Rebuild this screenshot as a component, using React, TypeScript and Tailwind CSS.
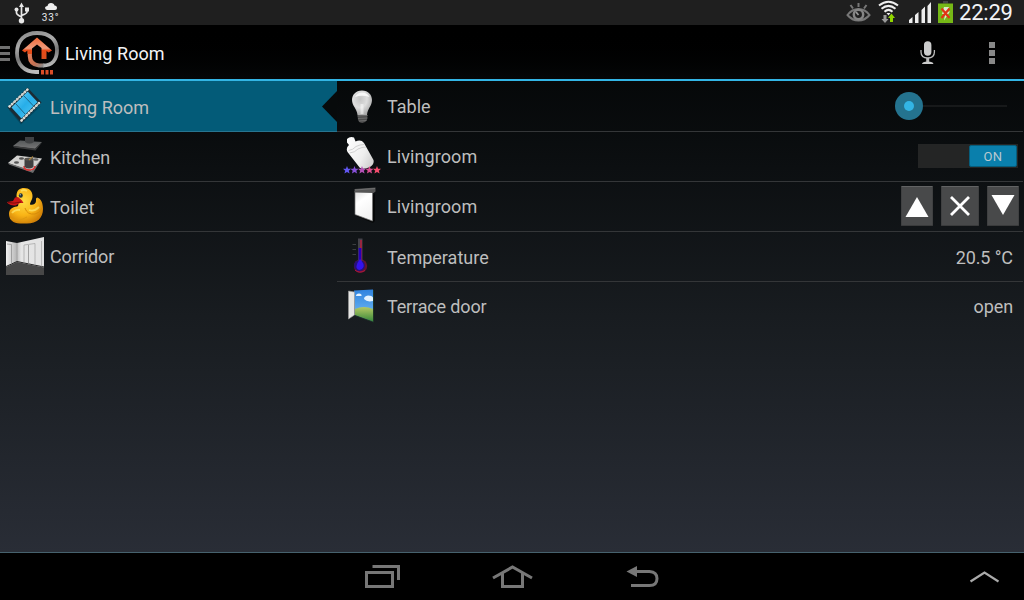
import type { ReactNode } from 'react'

function Icon({ box, children }: { box: string; children: ReactNode }) {
  const [, , width, height] = box.split(' ').map(Number)
  return (
    <svg viewBox={box} width={width} height={height} className="block shrink-0" fill="none">
      {children}
    </svg>
  )
}

function FilmIcon() {
  return (
    <Icon box="6 87 38 38">
      <defs>
        <linearGradient id="film" x1="0" y1="0" x2="1" y2="1">
          <stop offset="0" stopColor="#6fd5fb" />
          <stop offset="0.5" stopColor="#27aee9" />
          <stop offset="1" stopColor="#55cdf7" />
        </linearGradient>
      </defs>
      <path d="M9 110 L21 124.500 L41 106 L30 112Z" fill="#033f55" opacity="0.7" />
      <path d="M7.500 107.500 L27.500 87.500 L41.500 102.500 L21.500 123Z" fill="#1b2b34" />
      <path d="M11.500 107.500 L27.700 91.500 L37.500 102 L21.500 118.500Z" fill="url(#film)" />
      <path d="M15.500 103.500 L25.500 114.500 M23.500 95.500 L33.500 106" stroke="#1b6687" strokeWidth="1" />
      <path d="M9.500 106.500 L27.500 89.500 M21.500 120.500 L39.500 102.500" stroke="#f4f4ee" strokeWidth="2.500" strokeLinecap="round" strokeDasharray="0.2 3.300" />
      <path d="M9.500 106.500 L27.500 89.500 M21.500 120.500 L39.500 102.500" stroke="#c9cdc9" strokeWidth="1.300" />
    </Icon>
  )
}

function KitchenIcon() {
  return (
    <Icon box="6 137 38 38">
      <defs>
        <linearGradient id="hood" x1="0" y1="0" x2="0" y2="1">
          <stop offset="0" stopColor="#55585a" />
          <stop offset="1" stopColor="#777" />
        </linearGradient>
      </defs>
      <path d="M13 146 L20 140.500 L42 142 L35 149Z" fill="url(#hood)" />
      <path d="M13 146 L35 148.500 L42 142.500 L35.500 150.500 L14 147.500Z" fill="#3a3b3c" />
      <path d="M25 137 h9 v5 q-4.500 3 -9 0Z" fill="#404244" />
      <path d="M8 163 L17 155.500 L42 158.500 L32 171.500Z" fill="#d2d2d0" />
      <path d="M8 163 L32 170.500 L42 158.500 L33 173 L9 164.500Z" fill="#6c6c6c" />
      <ellipse cx="21.500" cy="158.500" rx="2.500" ry="1.200" fill="#555" />
      <ellipse cx="16.500" cy="162.500" rx="2.500" ry="1.200" fill="#555" />
      <ellipse cx="36" cy="159.500" rx="2.500" ry="1.200" fill="#666" />
      <path d="M24 166 q0 4 5 4 q5.500 0 6 -4" stroke="#e42d2d" strokeWidth="1.400" />
      <path d="M24.500 159 h9 v8 q-4.500 3 -9 0Z" fill="#3f4041" />
      <ellipse cx="29" cy="159" rx="4.500" ry="1.500" fill="#57544e" />
      <path d="M29 160 L33 156.500" stroke="#a5803f" strokeWidth="1.100" />
    </Icon>
  )
}

function DuckIcon() {
  return (
    <Icon box="6 187 38 38">
      <defs>
        <radialGradient id="duck" cx="0.42" cy="0.38" r="0.65">
          <stop offset="0" stopColor="#ffdc42" />
          <stop offset="0.6" stopColor="#f9b416" />
          <stop offset="1" stopColor="#d08008" />
        </radialGradient>
      </defs>
      <path
        d="M16.500 196 C16.500 190 20 188 24 188 C29.500 188 32.500 191.500 32.500 196 C32.500 200 30 202 30 204.500 C33 205.500 36 203.500 36 201 C36 199 35.500 198 37.500 197.500 C41 199 43 203 43 209 C43 218 37 223.500 27 223.500 H20 C13 223.500 9 219.500 9 214 C9 209.500 12 207 17 206.500 C19 206 18.500 203 17.500 201Z"
        fill="url(#duck)"
      />
      <path d="M25 208 Q27 215 35 214 Q40 213 42 208" stroke="#d78c0a" strokeWidth="1" />
      <path d="M10 218 Q17 223 27 217" stroke="#e09a10" strokeWidth="1" />
      <path d="M12 213 q3 -4 8 -3 M21 191 q3 -2 6 0 M29 210 q5 2 10 -3" stroke="#fff07b" strokeWidth="1.800" opacity="0.6" />
      <path d="M7 202 L13 201 L15 197.500 L18 197 L22 200.500 L23.500 203 L20 203 L15.500 205.500 Q11 206 8 203.500Z" fill="#c91717" />
      <path d="M8 202.500 Q14 204 21 202" stroke="#7d0b0b" strokeWidth="1" />
      <ellipse cx="20.800" cy="195.500" rx="2" ry="2.300" fill="#20303a" />
      <circle cx="20.200" cy="194.800" r="0.700" fill="#a9c4d0" />
    </Icon>
  )
}

function CorridorIcon() {
  return (
    <Icon box="6 237 38 38">
      <defs>
        <linearGradient id="wall" x1="0" y1="0" x2="1" y2="0">
          <stop offset="0" stopColor="#f0f0f0" />
          <stop offset="0.27" stopColor="#b9b9b9" />
          <stop offset="0.4" stopColor="#e6e6e6" />
          <stop offset="1" stopColor="#e2e2e2" />
        </linearGradient>
      </defs>
      <path d="M6 241 L17 243 L44 237 V275 H6Z" fill="url(#wall)" />
      <path d="M6 267 L17 262 L44 267.500 V275 H6Z" fill="#474747" />
      <path d="M6 266.500 L17 261.500 L44 267" stroke="#262626" strokeWidth="1" />
      <path d="M17 243 V261" stroke="#999" strokeWidth="0.800" />
      <path d="M24 262.500 V245 L35 243.500 V265 M41.500 266.500 V241" stroke="#aaa" strokeWidth="0.800" />
      <path d="M28.500 263.500 V245 M7 244 L11.500 244.500 V263.500" stroke="#999" strokeWidth="0.900" />
    </Icon>
  )
}

function BulbIcon() {
  return (
    <Icon box="343 87 38 38">
      <defs>
        <radialGradient id="bulb" cx="0.4" cy="0.35" r="0.7">
          <stop offset="0" stopColor="#c4c4c4" />
          <stop offset="0.5" stopColor="#dedede" />
          <stop offset="1" stopColor="#a5a5a5" />
        </radialGradient>
      </defs>
      <path d="M362 90.500 C368.500 90.500 372 95 372 100 C372 106 367.500 108.500 367 115 H357.500 C357 108.500 352 106 352 100 C352 95 355.500 90.500 362 90.500Z" fill="url(#bulb)" />
      <path d="M355 97 Q357 92.500 362 92.500 Q367 92.500 369.500 97 Q362 94.500 355 97Z" fill="#fff" opacity="0.8" />
      <path d="M362 104 V114" stroke="#fff" strokeWidth="3" opacity="0.500" />
      <path d="M357.500 115 H367.500 L367 120 Q365 123 362.500 123 Q359 123 358 120Z" fill="#4b4b4b" />
      <path d="M357.500 116 L367.500 115.500 M358 118.500 L367.500 118 M359 121 L366.500 120.500" stroke="#777" strokeWidth="0.800" />
    </Icon>
  )
}

const STARS = [
  { x: 347, color: '#6257f2' },
  { x: 354.5, color: '#8750d8' },
  { x: 362, color: '#b452b5' },
  { x: 369.5, color: '#d94e90' },
  { x: 377, color: '#f54d6d' },
]

function SceneIcon() {
  return (
    <Icon box="343 137 38 38">
      <defs>
        <linearGradient id="bottle" x1="0" y1="0" x2="1" y2="0.6">
          <stop offset="0" stopColor="#fff" />
          <stop offset="0.7" stopColor="#eee" />
          <stop offset="1" stopColor="#d5d5d5" />
        </linearGradient>
      </defs>
      <path
        d="M347 139 Q350 136 354 137.500 L355.500 141.500 Q361 139 364 143 L373.500 160 Q374.500 164 370 167 Q364 170 360 168 L347.500 152 Q345.500 148 349 145 L347 142.500Z"
        fill="url(#bottle)"
      />
      <path d="M348.500 150.500 Q353 150 356 146.500 Q360 144.500 364 144.500 M349.500 153 Q355 152.500 358 149 Q362 147 366 147" stroke="#ccc" strokeWidth="0.900" />
      {STARS.map(({ x, color }) => (
        <path
          key={x}
          transform={`translate(${x} 170)`}
          d="M0 -4 L1.100 -1.300 L4 -1.200 L1.800 0.700 L2.600 3.500 L0 2 L-2.600 3.500 L-1.800 0.700 L-4 -1.200 L-1.100 -1.300Z"
          fill={color}
        />
      ))}
    </Icon>
  )
}

function BlindIcon() {
  return (
    <Icon box="343 187 38 38">
      <defs>
        <linearGradient id="blind" x1="0" y1="0" x2="0.4" y2="1">
          <stop offset="0" stopColor="#dedede" />
          <stop offset="0.4" stopColor="#fff" />
          <stop offset="1" stopColor="#f2f2f2" />
        </linearGradient>
      </defs>
      <path d="M356 216 L373 223 L375 221 V193Z" fill="#000" opacity="0.6" />
      <path d="M355 191 H372.500 V221 L355 214.500Z" fill="url(#blind)" stroke="#777" strokeWidth="0.700" />
      <path d="M354.500 189 L375.500 187.500 V191.500 L373.500 193 L354.500 192.500Z" fill="#555" />
      <path d="M355 190 L375 188.500" stroke="#777" strokeWidth="0.800" />
    </Icon>
  )
}

function ThermometerIcon() {
  return (
    <Icon box="343 237 38 38">
      <path d="M352.500 244.500 H356 M352.500 249.500 H356 M352.500 254.500 H356" stroke="#3c3f41" strokeWidth="1" />
      <circle cx="360.500" cy="266" r="6.700" fill="#64142f" />
      <circle cx="359.500" cy="265.500" r="5.500" fill="#26107b" />
      <path d="M358 238.500 H362.500 V261 H358Z" fill="#45424a" />
      <path d="M361 240 V261" stroke="#b51e3d" strokeWidth="1.500" />
      <path d="M360 248 V264" stroke="#2600b8" strokeWidth="2.800" />
      <path d="M360 259 Q364.500 264 363.500 267 Q362 270 359.500 270 Q356 269 356.500 266 Q357 263 360 259Z" fill="#3413ed" />
      <path d="M355 270 Q359 274 365 270.500" stroke="#b1173e" strokeWidth="1" />
    </Icon>
  )
}

function TerraceIcon() {
  return (
    <Icon box="343 287 38 38">
      <defs>
        <linearGradient id="sky" x1="0" y1="0" x2="0" y2="1">
          <stop offset="0" stopColor="#2f83df" />
          <stop offset="1" stopColor="#7bc2f7" />
        </linearGradient>
        <linearGradient id="grass" x1="0" y1="0" x2="0" y2="1">
          <stop offset="0" stopColor="#b5c964" />
          <stop offset="1" stopColor="#37883a" />
        </linearGradient>
      </defs>
      <path d="M354 290.500 L373 289.500 V321.500 L355 315Z" fill="url(#sky)" />
      <path d="M355 309 Q364 305 373 309 V321.500 L355 315Z" fill="url(#grass)" />
      <path d="M356 296 q0 -2.500 3 -2.500 q3 0 2.500 2.500Z M364 299 q0 -3 4 -3.500 q4 0 5 2 v3.500 q-6 1.500 -9 -2Z" fill="#e4f3ff" />
      <path d="M348.500 291 L354.500 292 V315 L348.500 319Z" fill="#e7e7e5" stroke="#9b9b9b" strokeWidth="0.600" />
      <path d="M373.500 290 V322 L355 315.500" stroke="#203b28" strokeWidth="0.800" />
    </Icon>
  )
}

function StatusBar() {
  return (
    <div className="flex h-[25px] items-start bg-[#1f1f1f]">
      <div className="ml-3.5">
        <Icon box="14 0 16 25">
          <path d="M21.500 7 V20 M16.500 10 V13 Q16.500 14.500 21.500 17 M27 9.500 V12 Q27 13.500 21.500 15.500" stroke="#e8e8e8" strokeWidth="1.700" />
          <path d="M19 7 L21.500 2.500 L24 7Z" fill="#e8e8e8" />
          <circle cx="16.500" cy="9.500" r="2" fill="#e8e8e8" />
          <path d="M25 7.500 h4 v4 h-4Z" fill="#e8e8e8" />
          <circle cx="21.500" cy="20.800" r="2.700" fill="#e8e8e8" />
        </Icon>
      </div>
      <div className="ml-2.5 flex w-[21px] flex-col items-center">
        <Icon box="40 0 21 11">
          <path d="M47 10 Q45 9.500 45 7.500 Q45.500 6 47.500 6 Q48 3 51 3 Q54 3 54.500 5.500 Q57 5.500 57 8 Q57 10 55 10Z" fill="#eee" />
        </Icon>
        <span className="pt-px text-[10px] leading-[12px] tracking-[0.8px] text-gray-200">33°</span>
      </div>
      <div className="ml-auto flex">
        <Icon box="846 0 26 25">
          <path d="M847.500 15 Q852 9 858.500 9 Q865 9 869.500 15 Q865 20.500 858.500 20.500 Q852 20.500 847.500 15Z" stroke="#777" strokeWidth="2" />
          <circle cx="858.500" cy="14.500" r="4.700" stroke="#858585" strokeWidth="2.500" />
          <path d="M858.500 15 L856 12" stroke="#999" strokeWidth="1.800" />
          <path d="M858.500 3 V7 M850.500 5 L853 8.500 M866.500 5 L864 8.500" stroke="#777" strokeWidth="2" />
        </Icon>
        <div className="ml-1.5">
          <Icon box="878 0 22 25">
            <path d="M879 5.500 Q888.500 -2 898 5.500 M881.500 8.800 Q888.500 3 895.500 8.800 M884.500 11.800 Q888.500 8 892.500 11.800" stroke="#eee" strokeWidth="2" />
            <path d="M886.500 13 h4 l-2 2.500Z" fill="#eee" />
            <path d="M883.500 15 h3 v4 h2 l-3.500 4 l-3.500 -4 h2Z" fill="#999" />
            <path d="M890 22 h3 v-4 h2 l-3.500 -4.500 l-3.500 4.500 h2Z" fill="#91d500" />
          </Icon>
        </div>
        <div className="ml-2">
          <Icon box="908 0 24 25">
            <path d="M909 23 v-3 l3.500 -3 v6Z M915 23 v-8 l3.500 -3 v11Z M921.500 23 v-13 l3.500 -3.500 v16.500Z M927.500 23 v-17 l3.500 -4 v21Z" fill="#eee" />
          </Icon>
        </div>
        <div className="ml-1.5">
          <Icon box="938 0 15 25">
            <path d="M943 1 h5 v2.500 h-5Z" fill="#444" />
            <path d="M938 3.500 h15 v19.500 h-15Z" fill="#76b816" />
            <path d="M944 7 h5 l-1.500 4.500 h2.500 l-6 9 l1 -6.500 h-3Z" fill="#dce8c8" />
            <path d="M941.500 8.500 L949.500 18 M949.500 8.500 L941.500 18" stroke="#e03316" strokeWidth="2.200" />
          </Icon>
        </div>
        <span className="ml-[6px] w-[65px] text-[22px] leading-[25px] tracking-[-0.2px] text-gray-100">22:29</span>
      </div>
    </div>
  )
}

function ActionBar() {
  return (
    <div className="flex h-14 items-center border-b-2 border-[#33b5e5] bg-gradient-to-b from-black to-[#050708]">
      <Icon box="0 25 10 54">
        <path d="M0 47.500 H10 M0 53.500 H10 M0 59.500 H10" stroke="#707070" strokeWidth="3" />
      </Icon>
      <div className="ml-1">
        <Icon box="14 26 48 52">
          <defs>
            <linearGradient id="ring" x1="0" y1="0" x2="0.3" y2="1">
              <stop offset="0" stopColor="#888" />
              <stop offset="0.35" stopColor="#aaa" />
              <stop offset="0.65" stopColor="#777" />
              <stop offset="1" stopColor="#bbb" />
            </linearGradient>
            <linearGradient id="house" x1="0" y1="0" x2="0" y2="1">
              <stop offset="0" stopColor="#f36a38" />
              <stop offset="0.5" stopColor="#ed9b7c" />
              <stop offset="0.6" stopColor="#e84b18" />
              <stop offset="1" stopColor="#d9501f" />
            </linearGradient>
            <linearGradient id="post" x1="0" y1="0" x2="1" y2="1">
              <stop offset="0" stopColor="#e8835f" />
              <stop offset="0.6" stopColor="#c67051" />
              <stop offset="1" stopColor="#8a8a8a" />
            </linearGradient>
          </defs>
          <path
            d="M39 72 H36 C24 72 17 64 17 53 C17 40 25 33 37 33 C50 33 57 40 57 50 C57 60 52 65.500 43 65.500"
            stroke="url(#ring)"
            strokeWidth="3.800"
          />
          <path d="M43.500 65.500 H39 Q30 64.500 29.800 56 V50" stroke="url(#post)" strokeWidth="4.200" />
          <path d="M22 50.500 L37 37.500 L52 50.500 L48.500 52.500 L46.500 51 V59 H41.500 V48 L37 44.500 L32 48.500 V54 H27.500 V50.500 L25 52.500Z" fill="url(#house)" />
          <path d="M41 70 h3 v4.500 h-3Z M45.500 70 h3 v4.500 h-3Z M50 70 h3 v4.500 h-3Z" fill="#d94d27" />
        </Icon>
      </div>
      <h1 className="ml-[3px] pt-0.5 text-[18px] tracking-[0.05px] text-gray-100">Living Room</h1>
      <div className="mr-7 ml-auto flex items-center gap-[53px]">
        <Icon box="919 25 17 54">
          <path d="M924 45 a3.700 3.700 0 0 1 7.400 0 v7 a3.700 3.700 0 0 1 -7.400 0Z" fill="#ccc" />
          <path d="M921 50 v2 q0 6 6.700 6 q6.700 0 6.700 -6 v-2" stroke="#bbb" strokeWidth="1.300" />
          <path d="M927.700 58 v4" stroke="#bbb" strokeWidth="3" />
          <path d="M922 64 q0 -2.500 5.700 -2.500 q5.700 0 5.700 2.500Z" fill="#ccc" />
        </Icon>
        <Icon box="989 25 7 54">
          <path d="M989 42 h6 v6 h-6Z M989 50 h6 v6 h-6Z M989 58 h6 v6 h-6Z" fill="#888" />
        </Icon>
      </div>
    </div>
  )
}

function Slider() {
  return (
    <div className="mr-4 flex items-center">
      <div className="flex h-7 w-7 items-center justify-center rounded-full bg-[#24738f]">
        <div className="h-2.5 w-2.5 rounded-full bg-[#33b5e5]" />
      </div>
      <div className="h-0.5 w-[84px] bg-[#17191a]" />
    </div>
  )
}

function Toggle() {
  return (
    <div className="mr-[5px] mb-px flex h-6 w-[100px] justify-end bg-[#242525] p-px">
      <div className="flex w-12 items-center justify-center rounded-xs border border-[#075d7c] bg-[#0a7fac] pt-0.5 text-[13px] tracking-[0.3px] text-[#b9c9d0]">
        ON
      </div>
    </div>
  )
}

const BLIND_BUTTON = 'flex h-10 items-center justify-center rounded-[1px] border border-t-[#626364] border-r-[#3f4041] border-b-[#3a3b3c] border-l-[#3f4041] bg-[#48494a]'

function BlindButtons() {
  return (
    <div className="mr-1 mb-px flex gap-2">
      <button className={`${BLIND_BUTTON} w-8`}>
        <Icon box="902 187 30 38">
          <path d="M905.500 217 L917 197 L928.500 217Z" fill="#fff" />
        </Icon>
      </button>
      <button className={`${BLIND_BUTTON} w-[38px]`}>
        <Icon box="942 187 36 38">
          <path d="M951 197 L969 215 M969 197 L951 215" stroke="#fff" strokeWidth="2.800" />
        </Icon>
      </button>
      <button className={`${BLIND_BUTTON} w-8`}>
        <Icon box="988 187 30 38">
          <path d="M991.500 195 L1003 215 L1014.500 195Z" fill="#fff" />
        </Icon>
      </button>
    </div>
  )
}

const rooms = [
  { name: 'Living Room', icon: <FilmIcon />, active: true, label: 'pt-0.5' },
  { name: 'Kitchen', icon: <KitchenIcon />, label: 'pt-0.5 tracking-[-0.05px]' },
  { name: 'Toilet', icon: <DuckIcon />, label: 'pt-0.5' },
  { name: 'Corridor', icon: <CorridorIcon />, label: 'tracking-[-0.12px]' },
]

const devices = [
  { name: 'Table', icon: <BulbIcon />, control: <Slider />, label: '' },
  { name: 'Livingroom', icon: <SceneIcon />, control: <Toggle />, label: 'tracking-[0.08px]' },
  { name: 'Livingroom', icon: <BlindIcon />, control: <BlindButtons />, label: 'tracking-[0.08px]' },
  {
    name: 'Temperature',
    icon: <ThermometerIcon />,
    control: <span className="mr-2.5 pt-0.5 tracking-[-0.1px]">20.5 °C</span>,
    label: 'pt-0.5',
  },
  {
    name: 'Terrace door',
    icon: <TerraceIcon />,
    control: <span className="mr-2.5 tracking-[-0.1px]">open</span>,
    label: 'tracking-[-0.15px]',
  },
]

export default function App() {
  return (
    <div className="flex h-[600px] w-[1024px] flex-col overflow-hidden bg-black font-['Roboto',sans-serif] text-[18px] text-[#bebebe]">
      <StatusBar />
      <ActionBar />

      <div className="flex min-h-0 flex-1 bg-gradient-to-b from-[#060809] via-[#181c20] to-[#292d36]">
        {/* Rooms */}
        <div className="w-[337px]">
          {rooms.map((room) => (
            <div
              key={room.name}
              className={`flex items-center gap-1.5 border-b pl-1.5 last:border-transparent ${room.active ? 'h-[51px] border-[#287590] bg-[#035b78]' : 'h-[50px] border-[#343638]'}`}
            >
              <div className={room.active ? '' : 'mb-px'}>{room.icon}</div>
              <span className={room.label}>{room.name}</span>
              {room.active && (
                <svg width="15" height="50" viewBox="0 0 15 50" className="ml-auto">
                  <path d="M15 10 L0 25.500 L15 41Z" fill="#070a0b" />
                </svg>
              )}
            </div>
          ))}
        </div>

        {/* Devices of the selected room */}
        <div className="mr-px flex-1">
          {devices.map((device, i) => (
            <div
              key={i}
              className="flex h-[50px] items-center gap-1.5 border-b border-[#343638] pl-1.5 first:h-[51px] last:border-transparent"
            >
              <div className={i === 0 ? '' : 'mb-px'}>{device.icon}</div>
              <span className={`flex-1 ${device.label}`}>{device.name}</span>
              {device.control}
            </div>
          ))}
        </div>
      </div>

      <div className="flex h-12 items-start border-t border-[#46616d] bg-black">
        <div className="ml-[364px]">
          <Icon box="364 553 38 47">
            <path d="M366.500 572.500 h26 v14 h-26Z M372.500 566.500 h26 v13.500" stroke="#777" strokeWidth="3" />
          </Icon>
        </div>
        <div className="ml-[90px]">
          <Icon box="492 553 42 47">
            <path d="M493 578 L512.500 567 L532 578 M502.500 573 V586.500 H522.500 V573" stroke="#777" strokeWidth="3" />
          </Icon>
        </div>
        <div className="ml-[92px]">
          <Icon box="626 553 34 47">
            <path d="M636 571.500 H649.500 Q657 572 657 578.500 Q657 585.500 649.500 585.500 H631" stroke="#777" strokeWidth="3" />
            <path d="M626.500 571.500 L637 566 V577Z" fill="#777" />
          </Icon>
        </div>
        <div className="mr-[25px] ml-auto">
          <Icon box="969 553 30 47">
            <path d="M970.500 581.500 L984.500 572.500 L998.500 581.500" stroke="#aaa" strokeWidth="2.200" />
          </Icon>
        </div>
      </div>
    </div>
  )
}
